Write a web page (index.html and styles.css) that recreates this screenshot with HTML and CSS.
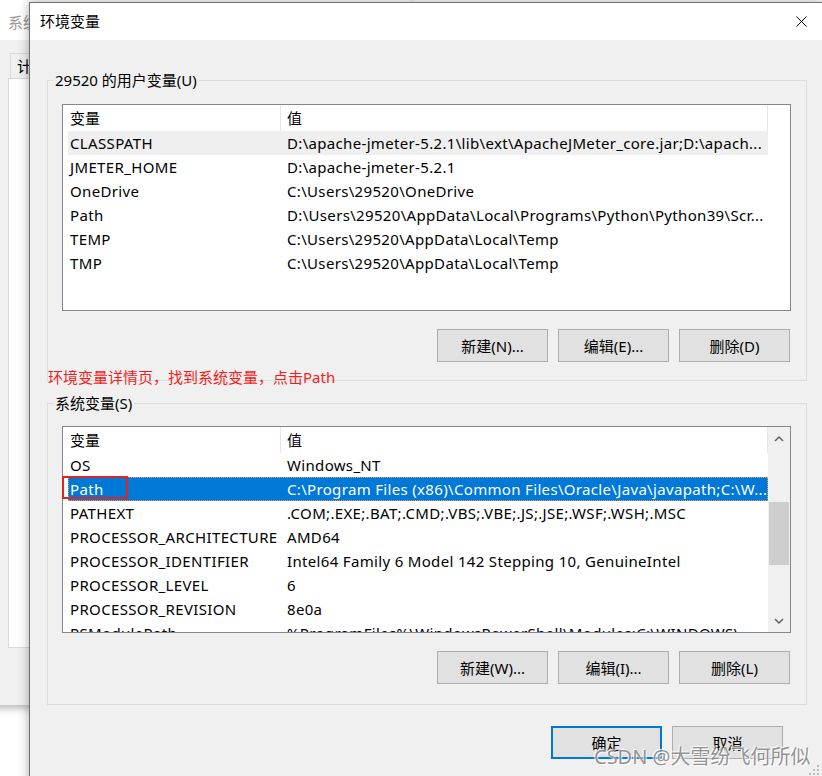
FILE: index.html
```html
<!DOCTYPE html>
<html lang="zh-CN">
<head>
    <meta charset="UTF-8">
    <title>环境变量</title>
    <link rel="stylesheet" href="styles.css">
</head>
<body>
<div class="desktop">
    <div class="back-window">
        <div class="back-title">系统属性</div>
        <div class="back-body">
            <div class="back-tab">计算机名</div>
            <div class="back-panel"></div>
        </div>
    </div>

    <div class="dialog">
        <div class="titlebar">
            <span class="title">环境变量</span>
            <span class="close">
                <svg width="11" height="11" viewBox="0 0 11 11"><path d="M0.5 0.5 L10.5 10.5 M10.5 0.5 L0.5 10.5" stroke="#000" stroke-width="1" fill="none"/></svg>
            </span>
        </div>
        <div class="content">
            <fieldset class="group user-group">
                <legend>29520 的用户变量(U)</legend>
                <div class="list">
                    <div class="list-main">
                        <div class="list-head">
                            <div class="head-name">变量</div>
                            <div class="head-value">值</div>
                        </div>
                        <div class="row hover"><div class="cell-name">CLASSPATH</div><div class="cell-value">D:\apache-jmeter-5.2.1\lib\ext\ApacheJMeter_core.jar;D:\apach...</div></div>
                        <div class="row"><div class="cell-name">JMETER_HOME</div><div class="cell-value">D:\apache-jmeter-5.2.1</div></div>
                        <div class="row"><div class="cell-name">OneDrive</div><div class="cell-value">C:\Users\29520\OneDrive</div></div>
                        <div class="row"><div class="cell-name">Path</div><div class="cell-value">D:\Users\29520\AppData\Local\Programs\Python\Python39\Scr...</div></div>
                        <div class="row"><div class="cell-name">TEMP</div><div class="cell-value">C:\Users\29520\AppData\Local\Temp</div></div>
                        <div class="row"><div class="cell-name">TMP</div><div class="cell-value">C:\Users\29520\AppData\Local\Temp</div></div>
                    </div>
                </div>
                <div class="buttons">
                    <button class="btn">新建(N)...</button>
                    <button class="btn">编辑(E)...</button>
                    <button class="btn">删除(D)</button>
                </div>
            </fieldset>

            <fieldset class="group system-group">
                <legend>系统变量(S)</legend>
                <div class="list">
                    <div class="list-main">
                        <div class="list-head">
                            <div class="head-name">变量</div>
                            <div class="head-value">值</div>
                        </div>
                        <div class="row"><div class="cell-name">OS</div><div class="cell-value">Windows_NT</div></div>
                        <div class="row selected"><div class="cell-name">Path</div><div class="cell-value">C:\Program Files (x86)\Common Files\Oracle\Java\javapath;C:\W...</div></div>
                        <div class="row"><div class="cell-name">PATHEXT</div><div class="cell-value">.COM;.EXE;.BAT;.CMD;.VBS;.VBE;.JS;.JSE;.WSF;.WSH;.MSC</div></div>
                        <div class="row"><div class="cell-name">PROCESSOR_ARCHITECTURE</div><div class="cell-value">AMD64</div></div>
                        <div class="row"><div class="cell-name">PROCESSOR_IDENTIFIER</div><div class="cell-value">Intel64 Family 6 Model 142 Stepping 10, GenuineIntel</div></div>
                        <div class="row"><div class="cell-name">PROCESSOR_LEVEL</div><div class="cell-value">6</div></div>
                        <div class="row"><div class="cell-name">PROCESSOR_REVISION</div><div class="cell-value">8e0a</div></div>
                        <div class="row"><div class="cell-name">PSModulePath</div><div class="cell-value">%ProgramFiles%\WindowsPowerShell\Modules;C:\WINDOWS\...</div></div>
                    </div>
                    <div class="scrollbar">
                        <div class="scroll-arrow">
                            <svg width="10" height="7" viewBox="0 0 10 7"><polyline points="1,6 5,2 9,6" stroke="#606060" stroke-width="1.5" fill="none"/></svg>
                        </div>
                        <div class="scroll-track"><div class="scroll-thumb"></div></div>
                        <div class="scroll-arrow">
                            <svg width="10" height="7" viewBox="0 0 10 7"><polyline points="1,1 5,5 9,1" stroke="#606060" stroke-width="1.5" fill="none"/></svg>
                        </div>
                    </div>
                </div>
                <div class="buttons">
                    <button class="btn">新建(W)...</button>
                    <button class="btn">编辑(I)...</button>
                    <button class="btn">删除(L)</button>
                </div>
            </fieldset>

            <div class="footer">
                <button class="btn default">确定</button>
                <button class="btn">取消</button>
            </div>
        </div>
    </div>

    <div class="note">环境变量详情页，找到系统变量，点击Path</div>
    <div class="mark-box"></div>
    <div class="watermark">CSDN @大雪纷飞何所似</div>
    <svg class="grip" width="12" height="12" viewBox="0 0 12 12">
        <rect x="9" y="1" width="2" height="2" fill="#bdbdbd"/>
        <rect x="5" y="5" width="2" height="2" fill="#bdbdbd"/>
        <rect x="9" y="5" width="2" height="2" fill="#bdbdbd"/>
        <rect x="1" y="9" width="2" height="2" fill="#bdbdbd"/>
        <rect x="5" y="9" width="2" height="2" fill="#bdbdbd"/>
        <rect x="9" y="9" width="2" height="2" fill="#bdbdbd"/>
    </svg>
</div>
</body>
</html>
```

FILE: styles.css
```css
* {
    box-sizing: border-box;
}
body {
    margin: 0;
    background-color: #ffffff;
    font-family: "Noto Sans", "Noto Sans CJK SC", sans-serif;
    font-size: 15px;
    color: #000000;
}
.desktop {
    position: relative;
    width: 822px;
    height: 776px;
    overflow: hidden;
}

/* window behind the dialog */
.back-window {
    position: absolute;
    left: -10px;
    top: 0;
    width: 420px;
    height: 705px;
    background-color: #f0f0f0;
    box-shadow: 0 3px 8px rgba(0, 0, 0, 0.3);
    display: flex;
    flex-direction: column;
}
.back-title {
    height: 40px;
    background-color: #ffffff;
    padding: 11px 0 0 18px;
    line-height: 22px;
    color: #999999;
}
.back-body {
    flex: 1;
    display: flex;
    flex-direction: column;
    padding: 13px 0 57px 18px;
}
.back-tab {
    margin-left: 2px;
    width: 90px;
    height: 25px;
    border: 1px solid #d9d9d9;
    border-bottom: none;
    padding-left: 6px;
    line-height: 24px;
}
.back-panel {
    flex: 1;
    background-color: #ffffff;
    border: 1px solid #d9d9d9;
}

/* dialog */
.dialog {
    position: absolute;
    left: 29px;
    top: 2px;
    width: 794px;
    height: 790px;
    background-color: #f0f0f0;
    border: 1px solid #707070;
    box-shadow: 0 0 10px rgba(0, 0, 0, 0.35);
    display: flex;
    flex-direction: column;
}
.titlebar {
    height: 37px;
    background-color: #ffffff;
    display: flex;
    align-items: center;
    padding-left: 10px;
    flex-shrink: 0;
}
.title {
    flex: 1;
    line-height: 37px;
}
.close {
    width: 42px;
    height: 37px;
    display: flex;
    align-items: center;
    justify-content: center;
}
.content {
    display: flex;
    flex-direction: column;
    padding: 0 15px 0 17px;
}

.group {
    margin: 30px 0 0;
    min-width: 0;
    border: 1px solid #dcdcdc;
    padding: 14px 15px 18px 14px;
}
.group legend {
    padding: 0 2px;
    margin-left: -9px;
    line-height: 20px;
}
.system-group {
    margin-top: 12px;
    padding: 13px 15px 20px 14px;
}

.list {
    height: 207px;
    border: 1px solid #828790;
    background-color: #ffffff;
    display: flex;
    overflow: hidden;
}
.list-main {
    width: 705px;
    display: flex;
    flex-direction: column;
}
.list-head {
    display: flex;
    height: 26px;
    line-height: 27px;
    flex-shrink: 0;
}
.head-name {
    width: 218px;
    padding-left: 7px;
    border-right: 1px solid #e5e5e5;
}
.head-value {
    width: 487px;
    padding-left: 6px;
    border-right: 1px solid #e5e5e5;
}
.row {
    display: flex;
    height: 24px;
    line-height: 24px;
    margin-left: 5px;
    width: 700px;
    flex-shrink: 0;
}
.cell-name {
    width: 213px;
    padding-left: 2px;
    white-space: nowrap;
    overflow: hidden;
    letter-spacing: 0.35px;
}
.cell-value {
    width: 487px;
    padding: 0 2px 0 6px;
    white-space: nowrap;
    overflow: hidden;
    letter-spacing: 0.33px;
}
.row.hover {
    background-color: #efefef;
}
.row.selected {
    background-color: #0078d7;
    color: #ffffff;
    outline: 1px dotted #f0a040;
    outline-offset: -1px;
}

.scrollbar {
    width: 22px;
    background-color: #f0f0f0;
    display: flex;
    flex-direction: column;
}
.scroll-arrow {
    height: 22px;
    display: flex;
    align-items: center;
    justify-content: center;
}
.scroll-track {
    flex: 1;
    padding-top: 53px;
}
.scroll-thumb {
    height: 63px;
    margin: 0 1px;
    background-color: #cdcdcd;
}

.buttons {
    display: flex;
    justify-content: flex-end;
    gap: 10px;
    margin-top: 18px;
    padding-right: 1px;
}
.btn {
    width: 111px;
    height: 33px;
    padding: 0;
    border: 1px solid #adadad;
    background-color: #e1e1e1;
    font: inherit;
    color: #000000;
}
.btn.default {
    border: 2px solid #0078d7;
}
.footer {
    display: flex;
    justify-content: flex-end;
    gap: 10px;
    margin-top: 21px;
    padding-right: 24px;
}

/* annotations on top of the screenshot */
.note {
    position: absolute;
    left: 48px;
    top: 367px;
    line-height: 20px;
    color: #f41c1c;
}
.mark-box {
    position: absolute;
    left: 62px;
    top: 476px;
    width: 66px;
    height: 23px;
    border: 2px solid #e02424;
}
.watermark {
    position: absolute;
    left: 594px;
    top: 745px;
    font-size: 20px;
    line-height: 24px;
    color: rgba(120, 120, 120, 0.8);
    text-shadow: 1px 1px 1px rgba(255, 255, 255, 0.9), -1px -1px 1px rgba(255, 255, 255, 0.9);
}
.grip {
    position: absolute;
    left: 808px;
    top: 764px;
}
```
